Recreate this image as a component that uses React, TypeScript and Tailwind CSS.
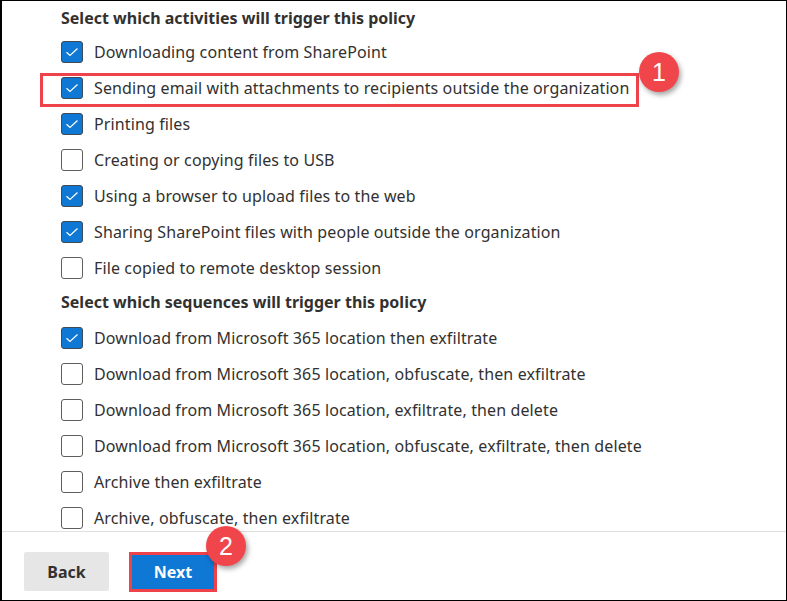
const activities = [
  { label: 'Downloading content from SharePoint', checked: true },
  { label: 'Sending email with attachments to recipients outside the organization', checked: true, highlight: true },
  { label: 'Printing files', checked: true },
  { label: 'Creating or copying files to USB', checked: false },
  { label: 'Using a browser to upload files to the web', checked: true },
  { label: 'Sharing SharePoint files with people outside the organization', checked: true },
  { label: 'File copied to remote desktop session', checked: false },
];

const sequences = [
  { label: 'Download from Microsoft 365 location then exfiltrate', checked: true },
  { label: 'Download from Microsoft 365 location, obfuscate, then exfiltrate', checked: false },
  { label: 'Download from Microsoft 365 location, exfiltrate, then delete', checked: false },
  { label: 'Download from Microsoft 365 location, obfuscate, exfiltrate, then delete', checked: false },
  { label: 'Archive then exfiltrate', checked: false },
  { label: 'Archive, obfuscate, then exfiltrate', checked: false },
];

function Badge({ n, className }: { n: number; className: string }) {
  return (
    <div
      className={`absolute w-[40px] h-[40px] rounded-full bg-[#f0464b] text-white flex items-center justify-center text-[25px] leading-none shadow-[2px_3px_5px_rgba(0,0,0,0.35)] ${className}`}
      style={{ fontFamily: '"Liberation Sans", Arial, sans-serif' }}
    >
      {n}
    </div>
  );
}

function Box({ checked }: { checked: boolean }) {
  if (checked) {
    return (
      <span className="w-[22px] h-[22px] shrink-0 rounded-[3px] bg-[#0f78d4] border border-[#3d4a57] flex items-center justify-center">
        <svg width="14" height="10" viewBox="0 0 14 10" fill="none">
          <path d="M1.5 5.2 L5 8.5 L12.5 1.5" stroke="white" strokeWidth="1.2" />
        </svg>
      </span>
    );
  }
  return <span className="w-[22px] h-[22px] shrink-0 rounded-[3px] bg-white border border-[#5f5e5c]" />;
}

function Row({ label, checked, highlight }: { label: string; checked: boolean; highlight?: boolean }) {
  return (
    <div className="relative h-[36px] flex items-center gap-[11px]">
      <Box checked={checked} />
      <span className="text-[16px] text-[#323130] tracking-[0.12px] whitespace-nowrap">{label}</span>
      {highlight && (
        <>
          <div className="absolute left-[-21px] top-[3px] w-[599px] h-[34px] border-[3px] border-[#f0424a]" />
          <Badge n={1} className="left-[578px] top-[-18px]" />
        </>
      )}
    </div>
  );
}

export default function App() {
  return (
    <div
      className="w-[787px] h-[601px] bg-white border border-black border-l-2 flex flex-col overflow-hidden"
      style={{ fontFamily: '"Segoe UI", "Noto Sans", "Open Sans", sans-serif' }}
    >
      <div className="h-[530px] overflow-hidden pl-[59px] pt-[5px]">
        <h2 className="text-[16px] font-bold leading-[24px] text-[#323130]">Select which activities will trigger this policy</h2>
        <div className="mt-[4px]">
          {activities.map((a) => (
            <Row key={a.label} {...a} />
          ))}
        </div>
        <h2 className="mt-[4px] text-[16px] font-bold leading-[24px] text-[#323130]">Select which sequences will trigger this policy</h2>
        <div className="mt-[6px]">
          {sequences.map((a) => (
            <Row key={a.label} {...a} />
          ))}
        </div>
      </div>
      <div className="flex-1 border-t border-[#e1dfdd] flex items-start gap-[20px] pl-[22px] pt-[20px]">
        <button className="w-[85px] h-[39px] rounded-[2px] bg-[#e6e6e6] text-[16px] font-bold text-[#323130]">Back</button>
        <div className="relative">
          <button className="w-[88px] h-[40px] bg-[#0f78d4] border-[3px] border-[#f0424a] text-[16px] font-bold text-white">Next</button>
          <Badge n={2} className="left-[77px] top-[-26px]" />
        </div>
      </div>
    </div>
  );
}
